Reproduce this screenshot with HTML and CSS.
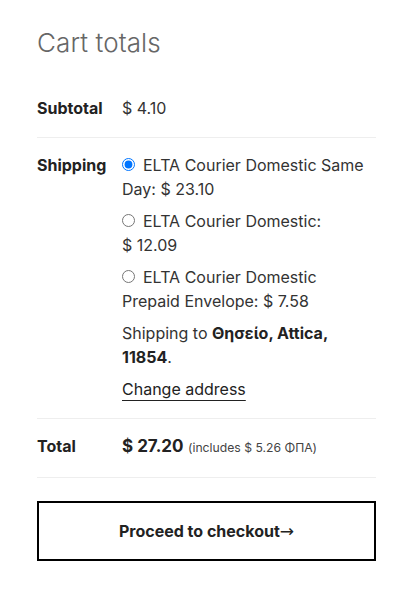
FILE: index.html
```html
<!DOCTYPE html>
<html lang="en">
<head>
    <meta charset="UTF-8">
    <meta name="viewport" content="width=device-width, initial-scale=1.0">
    <title>Cart totals</title>
    <link rel="stylesheet" href="styles.css">
</head>
<body>
    <div class="cart-totals">
        <h2>Cart totals</h2>

        <table class="totals-table">
            <tr class="cart-subtotal">
                <th>Subtotal</th>
                <td><span class="amount">$&nbsp;4.10</span></td>
            </tr>
            <tr class="shipping">
                <th>Shipping</th>
                <td>
                    <ul class="shipping-methods">
                        <li>
                            <input type="radio" name="shipping_method" id="ship-same-day" checked><label for="ship-same-day">ELTA Courier Domestic Same Day: <span class="amount">$&nbsp;23.10</span></label>
                        </li>
                        <li>
                            <input type="radio" name="shipping_method" id="ship-domestic"><label for="ship-domestic">ELTA Courier Domestic: <span class="amount">$&nbsp;12.09</span></label>
                        </li>
                        <li>
                            <input type="radio" name="shipping_method" id="ship-envelope"><label for="ship-envelope">ELTA Courier Domestic Prepaid Envelope: <span class="amount">$&nbsp;7.58</span></label>
                        </li>
                    </ul>
                    <p class="shipping-destination">Shipping to <strong>Θησείο, Attica, 11854</strong>.</p>
                    <a href="#" class="change-address">Change address</a>
                </td>
            </tr>
            <tr class="order-total">
                <th>Total</th>
                <td>
                    <strong class="amount">$&nbsp;27.20</strong>
                    <small class="includes-tax">(includes <span class="amount">$&nbsp;5.26</span> ΦΠΑ)</small>
                </td>
            </tr>
        </table>

        <a href="#" class="checkout-button">Proceed to checkout<span class="arrow">&rarr;</span></a>
    </div>
</body>
</html>
```
FILE: styles.css
```css
body {
    margin: 0;
    background-color: #fff;
    color: #333;
    font-family: Inter, "Liberation Sans", sans-serif;
    font-size: 16px;
    line-height: 24px;
}

.cart-totals {
    padding: 25px 24px 40px 37px;
}

.cart-totals h2 {
    margin: 0 0 20px;
    font-size: 26px;
    font-weight: 300;
    line-height: 1.4;
    letter-spacing: 0.1px;
    color: #666;
}

.totals-table {
    width: 100%;
    border-collapse: collapse;
}

.totals-table th,
.totals-table td {
    padding: 15px 0 17px;
    text-align: left;
    vertical-align: top;
    border-bottom: 1px solid #eee;
}

.totals-table th {
    width: 85px;
    font-weight: 700;
    color: #222;
}

.shipping-methods {
    list-style: none;
    margin: 0;
    padding: 0;
}

.shipping-methods li {
    margin: 0 0 8px;
}

.shipping-methods input[type="radio"] {
    margin: 0 8px 0 0;
    width: 13px;
    height: 13px;
}

.shipping-destination {
    margin: 0 0 8px;
}

.shipping-destination strong {
    color: #222;
}

.change-address {
    color: #222;
    text-decoration: underline;
    text-decoration-thickness: 1px;
    text-underline-offset: 5px;
}

.order-total strong.amount {
    font-size: 17px;
    color: #222;
}

.includes-tax {
    font-size: 12.2px;
    color: #444;
}

.checkout-button {
    display: block;
    margin-top: 23px;
    height: 60px;
    box-sizing: border-box;
    border: 2px solid #000;
    text-align: center;
    line-height: 56px;
    font-weight: 700;
    color: #222;
    text-decoration: none;
}

.checkout-button .arrow {
    font-family: "DejaVu Sans", sans-serif;
    font-size: 17px;
    font-weight: 400;
}
```
